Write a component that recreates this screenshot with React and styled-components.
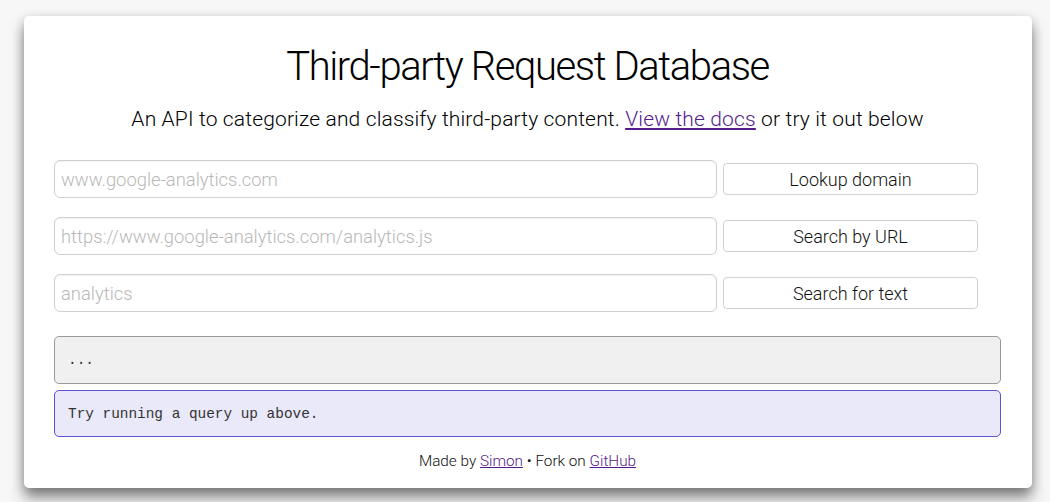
import React from 'react';
import styled, { createGlobalStyle } from 'styled-components';

const GlobalStyle = createGlobalStyle`
  html, body {
    margin: 0;
    padding: 0;
    background: #f7f7f7;
  }
  body {
    font-family: Roboto, "Helvetica Neue", "Liberation Sans", sans-serif;
    font-weight: 300;
    color: #111;
  }
  * {
    box-sizing: border-box;
  }
`;

const Page = styled.div`
  padding: 16px 18px 0 24px;
  height: 502px;
  overflow: hidden;
`;

const Card = styled.main`
  width: 1008px;
  height: 472px;
  background: #fff;
  border-radius: 5px;
  box-shadow: 0 9px 14px rgba(0, 0, 0, 0.5), 0 0 10px rgba(0, 0, 0, 0.08);
  padding: 27px 31px 0 30px;
  display: flex;
  flex-direction: column;
`;

const Title = styled.h1`
  margin: 0;
  font-size: 40px;
  line-height: 48px;
  font-weight: 300;
  letter-spacing: -1.4px;
  text-align: center;
  color: #000;
`;

const Subtitle = styled.p`
  margin: 16px 0 29px;
  font-size: 21px;
  line-height: 24px;
  letter-spacing: 0.15px;
  text-align: center;
  color: #000;
`;

const Link = styled.a`
  color: #551a8b;
  text-decoration: underline;
`;

const Form = styled.form`
  display: flex;
  flex-direction: column;
  gap: 19px;
  width: 924px;
`;

const Row = styled.div`
  display: flex;
  align-items: center;
  gap: 6px;
`;

const Input = styled.input`
  width: 663px;
  height: 38px;
  border: 1px solid #d0d0d0;
  border-radius: 6px;
  padding: 0 6px;
  font-family: inherit;
  font-weight: 300;
  font-size: 18.4px;
  color: #222;
  box-shadow: inset 0 1px 2px rgba(0, 0, 0, 0.06);
  outline: none;

  &::placeholder {
    color: #b8b8b8;
  }
`;

const Button = styled.button`
  width: 255px;
  height: 32px;
  background: #fff;
  border: 1px solid #d0d0d0;
  border-radius: 4px;
  font-family: inherit;
  font-weight: 300;
  font-size: 18px;
  color: #111;
  cursor: pointer;
`;

const Output = styled.pre`
  margin: ${p => (p.$first ? '24px' : '6px')} 0 0;
  height: ${p => (p.$first ? '48px' : '47px')};
  padding: 0 13px;
  display: flex;
  align-items: center;
  font-family: "Liberation Mono", "Courier New", monospace;
  font-size: 14.4px;
  color: #333;
  border-radius: 5px;
  border: 1px solid ${p => (p.$tone === 'info' ? '#5a52d0' : '#999')};
  background: ${p => (p.$tone === 'info' ? '#eae9f9' : '#f0f0f0')};
`;

const Footer = styled.footer`
  margin-top: 15px;
  text-align: center;
  font-size: 15.3px;
  color: #111;
`;

export default function App() {
  return (
    <>
      <GlobalStyle />
      <Page>
        <Card>
          <Title>Third-party Request Database</Title>
          <Subtitle>
            An API to categorize and classify third-party content. <Link href="#docs">View the docs</Link> or try it out below
          </Subtitle>
          <Form onSubmit={e => e.preventDefault()}>
            <Row>
              <Input placeholder="www.google-analytics.com" />
              <Button type="button">Lookup domain</Button>
            </Row>
            <Row>
              <Input placeholder="https://www.google-analytics.com/analytics.js" />
              <Button type="button">Search by URL</Button>
            </Row>
            <Row>
              <Input placeholder="analytics" />
              <Button type="button">Search for text</Button>
            </Row>
          </Form>
          <Output $first>...</Output>
          <Output $tone="info">Try running a query up above.</Output>
          <Footer>
            Made by <Link href="#simon">Simon</Link> • Fork on <Link href="#github">GitHub</Link>
          </Footer>
        </Card>
      </Page>
    </>
  );
}
